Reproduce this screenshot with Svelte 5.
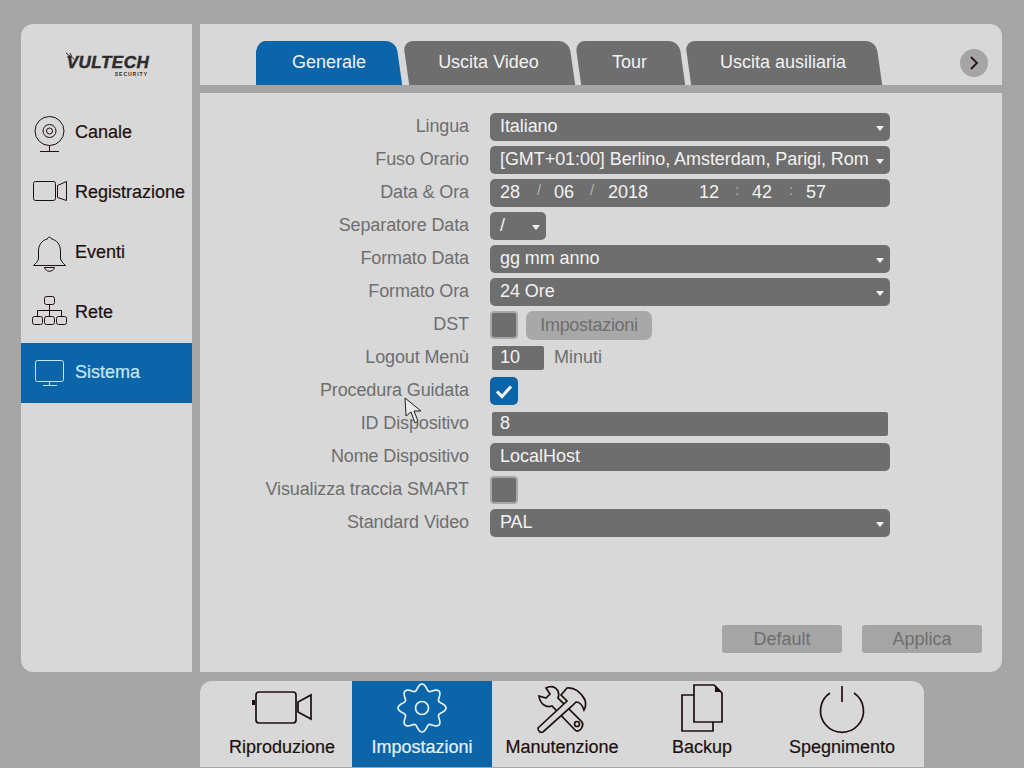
<script>
	const nav = [
		{ label: 'Canale', box: '21 103 54 60', icon: 'canale' },
		{ label: 'Registrazione', box: '21 163 54 60', icon: 'reg' },
		{ label: 'Eventi', box: '21 223 54 60', icon: 'eventi' },
		{ label: 'Rete', box: '21 283 54 60', icon: 'rete' },
		{ label: 'Sistema', box: '21 343 54 60', icon: 'sistema', active: true }
	];

	const tabs = [
		{ label: 'Generale', width: 140, active: true },
		{ label: 'Uscita Video', width: 166 },
		{ label: 'Tour', width: 104 },
		{ label: 'Uscita ausiliaria', width: 191 }
	];

	const rows = [
		{ label: 'Lingua', type: 'select', value: 'Italiano' },
		{ label: 'Fuso Orario', type: 'select', value: '[GMT+01:00] Berlino, Amsterdam, Parigi, Rom' },
		{ label: 'Data & Ora', type: 'date' },
		{ label: 'Separatore Data', type: 'select', value: '/', small: true },
		{ label: 'Formato Data', type: 'select', value: 'gg mm anno' },
		{ label: 'Formato Ora', type: 'select', value: '24 Ore' },
		{ label: 'DST', type: 'dst' },
		{ label: 'Logout Menù', type: 'logout' },
		{ label: 'Procedura Guidata', type: 'check' },
		{ label: 'ID Dispositivo', type: 'slim', value: '8' },
		{ label: 'Nome Dispositivo', type: 'text', value: 'LocalHost' },
		{ label: 'Visualizza traccia SMART', type: 'box' },
		{ label: 'Standard Video', type: 'select', value: 'PAL' }
	];

	const dock = [
		{ label: 'Riproduzione', box: '212 681 140 56', icon: 'play' },
		{ label: 'Impostazioni', box: '352 681 140 56', icon: 'gear', active: true },
		{ label: 'Manutenzione', box: '492 681 140 56', icon: 'tools' },
		{ label: 'Backup', box: '632 681 140 56', icon: 'backup' },
		{ label: 'Spegnimento', box: '772 681 140 56', icon: 'power' }
	];

	// wavy 8 lobe outline for the settings gear
	const gear = Array.from({ length: 144 }, (_, i) => {
		const a = (i / 144) * Math.PI * 2;
		const r = 21 + 3 * Math.cos(8 * a);
		return `${(422 + r * Math.sin(a)).toFixed(2)},${(708 - r * Math.cos(a)).toFixed(2)}`;
	}).join(' ');
</script>

<div class="screen">
	<div class="top">
		<aside class="side">
			<div class="logo">
				<svg class="sparks" viewBox="0 0 12 10" width="12" height="10">
					<path d="M1 1 L9 7 M5 1 L7 5 M2 5 L6 6" />
				</svg>
				<span class="brand">VULTECH</span>
				<span class="sub">SECURITY</span>
			</div>
			{#each nav as item}
				<div class="nav-item" class:active={item.active}>
					<svg viewBox={item.box} width="54" height="60">
						{#if item.icon === 'canale'}
							<circle cx="49.5" cy="131" r="14.5" />
							<circle cx="49.5" cy="131" r="6.5" />
							<circle cx="49.5" cy="131" r="3" />
							<path d="M49.5 145.5 V151.5 M40 151.5 H59" />
						{:else if item.icon === 'reg'}
							<rect x="33.5" y="181.5" width="22" height="19" rx="2" />
							<path d="M57.5 185.5 L66.5 181.5 V200.5 L57.5 197.5 Z" />
						{:else if item.icon === 'eventi'}
							<path d="M47.5 239 C47.5 236.5 51.5 236.5 51.5 239 C57 240 60.5 245 60.5 251 V258 C60.5 261 63 263 65.5 265.5 H33.5 C36 263 38.5 261 38.5 258 V251 C38.5 245 42 240 47.5 239 Z" />
							<path d="M44.5 267.5 C45.5 272.5 53.5 272.5 54.5 267.5 Z" />
						{:else if item.icon === 'rete'}
							<rect x="44.5" y="296.5" width="10" height="8" rx="2" />
							<path d="M49.5 304.5 V316.5 M37.5 316.5 V310.5 H61.5 V316.5" />
							<rect x="32.5" y="316.5" width="10" height="8" rx="2" />
							<rect x="44.5" y="316.5" width="10" height="8" rx="2" />
							<rect x="56.5" y="316.5" width="10" height="8" rx="2" />
						{:else}
							<rect x="35.5" y="360.5" width="28" height="21" rx="2" />
							<path d="M49.5 381.5 V385.5 M43 385.5 H57" />
						{/if}
					</svg>
					<span>{item.label}</span>
				</div>
			{/each}
		</aside>

		<main class="main">
			<div class="tabbar">
				<div class="tabs">
					{#each tabs as tab}
						<div class="tab" class:active={tab.active} style="width: {tab.width}px">
							<span>{tab.label}</span>
						</div>
					{/each}
				</div>
				<div class="next">
					<svg viewBox="0 0 28 28" width="28" height="28">
						<path d="M11 8 L17 14 L11 20" />
					</svg>
				</div>
			</div>

			<section class="content">
				<div class="form">
					{#each rows as row}
						<div class="label">{row.label}</div>
						<div class="control">
							{#if row.type === 'select'}
								<div class="field select" class:small={row.small}>
									<span>{row.value}</span>
								</div>
							{:else if row.type === 'date'}
								<div class="field date">
									<span>28</span><i>/</i><span>06</span><i>/</i><span>2018</span>
									<span>12</span><i>:</i><span>42</span><i>:</i><span>57</span>
								</div>
							{:else if row.type === 'dst'}
								<div class="box"></div>
								<div class="setup">Impostazioni</div>
							{:else if row.type === 'logout'}
								<div class="slim minutes">10</div>
								<div class="unit">Minuti</div>
							{:else if row.type === 'check'}
								<div class="box checked">
									<svg viewBox="0 0 28 28" width="28" height="28">
										<path d="M7 14.5 L12 19.5 L21 9.5" />
									</svg>
								</div>
							{:else if row.type === 'slim'}
								<div class="slim wide">{row.value}</div>
							{:else if row.type === 'text'}
								<div class="field"><span>{row.value}</span></div>
							{:else}
								<div class="box"></div>
							{/if}
						</div>
					{/each}
				</div>

				<div class="actions">
					<div class="action">Default</div>
					<div class="action">Applica</div>
				</div>
			</section>
		</main>
	</div>

	<nav class="dock">
		{#each dock as item}
			<div class="dock-item" class:active={item.active}>
				<svg viewBox={item.box} width="140" height="56">
					{#if item.icon === 'play'}
						<rect x="256" y="692" width="40" height="31" rx="3" />
						<path class="solid" d="M252 700 H255 V705 H252 Z" />
						<path d="M298 702 L311 695 V719 L298 712 Z" />
					{:else if item.icon === 'gear'}
						<polygon points={gear} />
						<circle cx="422" cy="708" r="6.5" />
					{:else if item.icon === 'tools'}
						<path d="M539 696 L546 698 L550 694 L546 688 C551 685 556 687 558 691 C559 694 559 696 558 698 L582 722 C584 725 582 727 581 729 C579 731 577 732 575 730 L552 706 C546 708 540 704 539 696 Z" />
						<circle cx="577" cy="724" r="2.5" />
						<path class="over" d="M561 695 L567 688 C574 687 581 692 585 700 C586 704 586 707 584 710 C582 704 579 702 576 702 L572 706 L543 732 C540 733 538 731 538 728 L567 701 Z" />
					{:else if item.icon === 'backup'}
						<path d="M694 695 H682 V731 H713 V722" />
						<path d="M694 685 H714 L722 693 V722 H694 Z" />
						<path class="solid" d="M715 685 L722 692 H715 Z" />
					{:else}
						<path d="M830 693 A21.5 21.5 0 1 0 854 693" />
						<path d="M842 686 V702" />
					{/if}
				</svg>
				<span>{item.label}</span>
			</div>
		{/each}
	</nav>

	<svg class="cursor" viewBox="0 0 18 27" width="18" height="27">
		<path d="M1 1 L2 19 L7 15 L11 26 L14 24 L10 14 L17 14 Z" />
	</svg>
</div>

<style>
	:global(body) {
		background: #a5a5a5;
	}
	.screen {
		position: relative;
		width: 1024px;
		height: 768px;
		padding: 24px 22px 0 21px;
		box-sizing: border-box;
		font-family: 'Liberation Sans', Arial, sans-serif;
		font-size: 18px;
		overflow: hidden;
	}
	svg {
		display: block;
		flex: none;
	}
	svg path,
	svg rect,
	svg circle,
	svg polygon {
		fill: none;
		stroke: currentColor;
	}
	svg path.solid {
		fill: currentColor;
		stroke: none;
	}
	.top {
		display: flex;
		gap: 8px;
		height: 648px;
	}

	/* left column */
	.side {
		width: 171px;
		background: #d8d8d8;
		border-radius: 12px 0 0 12px;
		color: #1d0f0f;
	}
	.logo {
		position: relative;
		height: 79px;
		display: flex;
		flex-direction: column;
		align-items: center;
		padding: 31px 0 0 3px;
		box-sizing: border-box;
		color: #2c2c2c;
	}
	.sparks {
		position: absolute;
		left: 44px;
		top: 28px;
		stroke-width: 1;
	}
	.brand {
		font-weight: bold;
		font-style: italic;
		font-size: 17px;
		line-height: 15px;
		letter-spacing: 0.5px;
		-webkit-text-stroke: 0.5px #2c2c2c;
	}
	.sub {
		align-self: flex-end;
		margin: 1px 44px 0 0;
		font-size: 5px;
		font-weight: bold;
		line-height: 6px;
		letter-spacing: 1px;
	}
	.nav-item {
		display: flex;
		align-items: center;
		height: 60px;
	}
	.nav-item span {
		margin-top: -1px;
		-webkit-text-stroke: 0.2px currentColor;
	}
	.nav-item.active {
		background: #0b65a8;
		color: #c3e8fb;
	}

	/* tabs */
	.main {
		width: 802px;
		display: flex;
		flex-direction: column;
		gap: 8px;
	}
	.tabbar {
		height: 61px;
		display: flex;
		align-items: flex-end;
		justify-content: space-between;
		background: #d8d8d8;
		border-radius: 0 12px 0 0;
		padding: 0 14px 0 56px;
		box-sizing: border-box;
	}
	.tabs {
		display: flex;
		gap: 6px;
	}
	.tab {
		position: relative;
		height: 44px;
		display: flex;
		align-items: center;
		justify-content: center;
		padding: 0 0 2px 5px;
		box-sizing: border-box;
		color: #f2f2f2;
	}
	.tab.active {
		margin-right: 1px;
		padding-left: 6px;
	}
	.tab::before {
		content: '';
		position: absolute;
		inset: 0;
		background: #6e6e6e;
		border-radius: 10px 10px 0 0;
		transform: skewX(8deg);
		transform-origin: top left;
	}
	.tab.active::before {
		background: #0b65a8;
	}
	.tab.active::after {
		content: '';
		position: absolute;
		inset: 0 40px 0 0;
		background: #0b65a8;
		border-radius: 12px 0 0 0;
	}
	.tab span {
		position: relative;
		z-index: 1;
	}
	.next {
		width: 28px;
		height: 28px;
		margin-bottom: 8px;
		border-radius: 50%;
		background: #a5a5a5;
		color: #24151a;
	}
	.next svg path {
		stroke-width: 1.8;
	}

	/* settings form */
	.content {
		flex: 1;
		display: flex;
		flex-direction: column;
		background: #d8d8d8;
		border-radius: 0 0 12px 0;
		padding-top: 20px;
	}
	.form {
		display: grid;
		grid-template-columns: 269px 400px;
		grid-auto-rows: 28px;
		column-gap: 21px;
		row-gap: 5px;
	}
	.label {
		text-align: right;
		color: #6e6e6e;
		line-height: 26px;
		letter-spacing: -0.12px;
	}
	.control {
		display: flex;
		align-items: center;
		color: #f2f2f2;
	}
	.field {
		flex: 1;
		min-width: 0;
		height: 28px;
		display: flex;
		align-items: center;
		padding: 0 10px 2px;
		box-sizing: border-box;
		background: #6e6e6e;
		border-radius: 5px;
		white-space: nowrap;
	}
	.select {
		justify-content: space-between;
	}
	.select span {
		letter-spacing: -0.07px;
	}
	.select::after {
		content: '';
		margin: 4px -4px 0 0;
		border: 4px solid transparent;
		border-top: 5px solid #f2f2f2;
		border-bottom: 0;
	}
	.select.small {
		flex: none;
		width: 56px;
	}
	.date {
		display: grid;
		grid-template-columns: 37px 17px 36px 18px 91px 36px 17px 37px 17px auto;
	}
	.date i {
		font-style: normal;
		font-size: 15px;
		color: #b4b4b4;
		transform: translateY(-3px);
	}
	.box {
		width: 28px;
		height: 28px;
		box-sizing: border-box;
		background: #6e6e6e;
		border: 2px solid #a8a8a8;
		border-radius: 4px;
	}
	.box.checked {
		display: flex;
		align-items: center;
		justify-content: center;
		background: #0b65a8;
		border: 0;
		border-radius: 5px;
		color: #fff;
	}
	.checked svg path {
		stroke-width: 3;
	}
	.setup {
		margin: 0 0 0 8px;
		width: 126px;
		height: 29px;
		line-height: 29px;
		text-align: center;
		background: #a8a8a8;
		color: #6e6e6e;
		border-radius: 7px;
		letter-spacing: -0.3px;
	}
	.slim {
		height: 24px;
		line-height: 22px;
		margin-left: 2px;
		padding-left: 8px;
		box-sizing: border-box;
		background: #6e6e6e;
		border-radius: 2px;
	}
	.minutes {
		width: 52px;
	}
	.wide {
		width: 396px;
	}
	.unit {
		margin: -2px 0 0 10px;
		color: #6e6e6e;
	}
	.actions {
		margin-top: auto;
		display: flex;
		justify-content: flex-end;
		gap: 20px;
		padding: 0 20px 19px 0;
	}
	.action {
		width: 120px;
		height: 28px;
		line-height: 28px;
		text-align: center;
		background: #a5a5a5;
		color: #6e6e6e;
		border-radius: 3px;
	}

	/* bottom bar */
	.dock {
		display: flex;
		width: 724px;
		height: 86px;
		box-sizing: border-box;
		margin: 9px 0 0 179px;
		padding: 0 12px;
		background: #d8d8d8;
		border-radius: 12px 12px 0 0;
		color: #1d0f0f;
	}
	.dock-item {
		width: 140px;
		display: flex;
		flex-direction: column;
		align-items: center;
	}
	.dock-item span {
		line-height: 20px;
		-webkit-text-stroke: 0.2px currentColor;
	}
	.dock-item svg path,
	.dock-item svg rect,
	.dock-item svg circle,
	.dock-item svg polygon {
		stroke-width: 1.7;
	}
	.dock-item svg path.over {
		fill: #d8d8d8;
	}
	.dock-item.active {
		background: #0b65a8;
		color: #e6f1f8;
	}

	.cursor {
		position: absolute;
		left: 404px;
		top: 397px;
		color: #222;
	}
	.cursor path {
		fill: #e8e8e8;
	}
</style>
